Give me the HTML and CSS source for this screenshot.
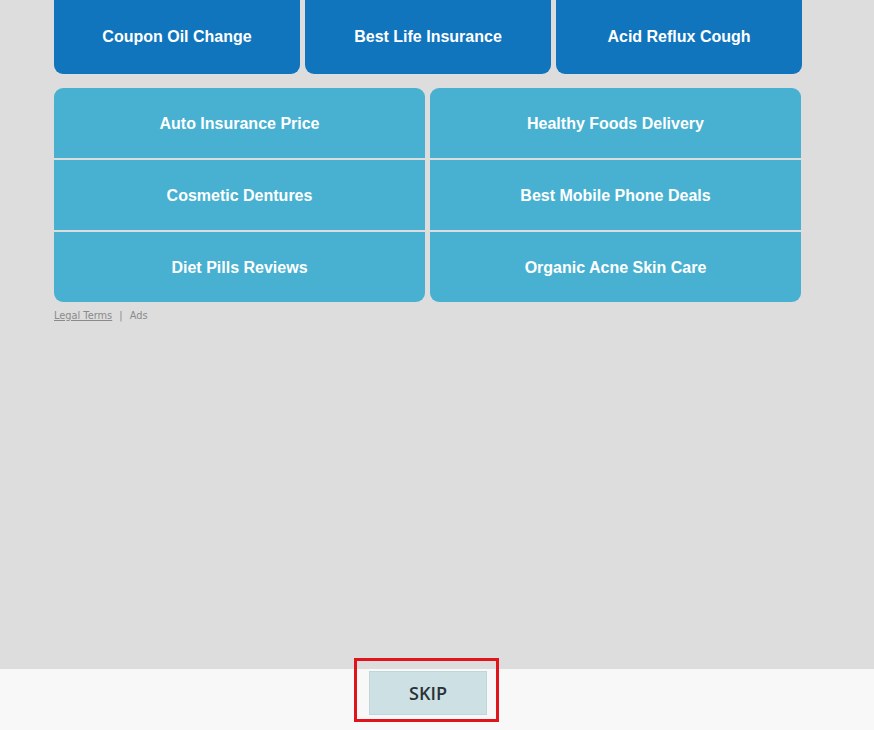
FILE: index.html
```html
<!DOCTYPE html>
<html lang="en">
<head>
  <meta charset="UTF-8" />
  <meta name="viewport" content="width=device-width, initial-scale=1.0"/>
  <title>Related Searches</title>
  <link rel="stylesheet" href="styles.css">
</head>
<body>

  <div class="page">
    <div class="ads">
      <div class="top-links">
        <a href="#">Coupon Oil Change</a>
        <a href="#">Best Life Insurance</a>
        <a href="#">Acid Reflux Cough</a>
      </div>

      <div class="grid-links">
        <div class="column">
          <a href="#">Auto Insurance Price</a>
          <a href="#">Cosmetic Dentures</a>
          <a href="#">Diet Pills Reviews</a>
        </div>
        <div class="column">
          <a href="#">Healthy Foods Delivery</a>
          <a href="#">Best Mobile Phone Deals</a>
          <a href="#">Organic Acne Skin Care</a>
        </div>
      </div>

      <div class="legal">
        <a href="#">Legal Terms</a>
        <span class="sep">|</span>
        <span>Ads</span>
      </div>
    </div>
  </div>

  <footer class="skip-bar">
    <button class="skip">SKIP</button>
    <div class="highlight"></div>
  </footer>

</body>
</html>
```

FILE: styles.css
```css
body {
  margin: 0;
  height: 100vh;
  display: flex;
  flex-direction: column;
  background: #dddddd;
  font-family: "Liberation Sans", Arial, sans-serif;
  overflow: hidden;
}

.page {
  flex: 1;
  padding-left: 54px;
}

.ads {
  width: 748px;
}

.top-links {
  display: flex;
  gap: 5px;
  margin-top: -2px;
}

.top-links a {
  flex: 1;
  height: 76px;
  box-sizing: border-box;
  padding-top: 2px;
  display: flex;
  align-items: center;
  justify-content: center;
  background: #1075bd;
  color: #fff;
  font-size: 16px;
  font-weight: bold;
  text-decoration: none;
  border-radius: 0 0 9px 9px;
}

.grid-links {
  display: flex;
  gap: 5px;
  margin-top: 14px;
  width: 747px;
}

.column {
  flex: 1;
  display: flex;
  flex-direction: column;
  gap: 2px;
  border-radius: 9px;
  overflow: hidden;
}

.column a {
  height: 70px;
  box-sizing: border-box;
  padding-top: 2px;
  display: flex;
  align-items: center;
  justify-content: center;
  background: #48b1d1;
  color: #fff;
  font-size: 16px;
  font-weight: bold;
  text-decoration: none;
}

.legal {
  margin-top: 8px;
  font-family: "DejaVu Sans", Verdana, sans-serif;
  font-size: 9.8px;
  color: #8a8a8a;
}

.legal a {
  color: #8a8a8a;
  text-decoration: underline;
}

.legal .sep {
  margin: 0 4px;
}

/* skip bar at the bottom */
.skip-bar {
  position: relative;
  height: 61px;
  flex-shrink: 0;
  background: #f8f8f8;
  display: flex;
  align-items: flex-start;
  padding-left: 369px;
}

.skip {
  margin-top: 2px;
  width: 118px;
  height: 44px;
  background: #cde0e4;
  border: 1px solid #c2d6da;
  color: #2a3236;
  font-family: "Open Sans", sans-serif;
  font-size: 18px;
  font-weight: 600;
  cursor: pointer;
}

.highlight {
  position: absolute;
  left: 354px;
  top: -11px;
  width: 139px;
  height: 58px;
  border: 3px solid #e0141a;
  pointer-events: none;
}
```
